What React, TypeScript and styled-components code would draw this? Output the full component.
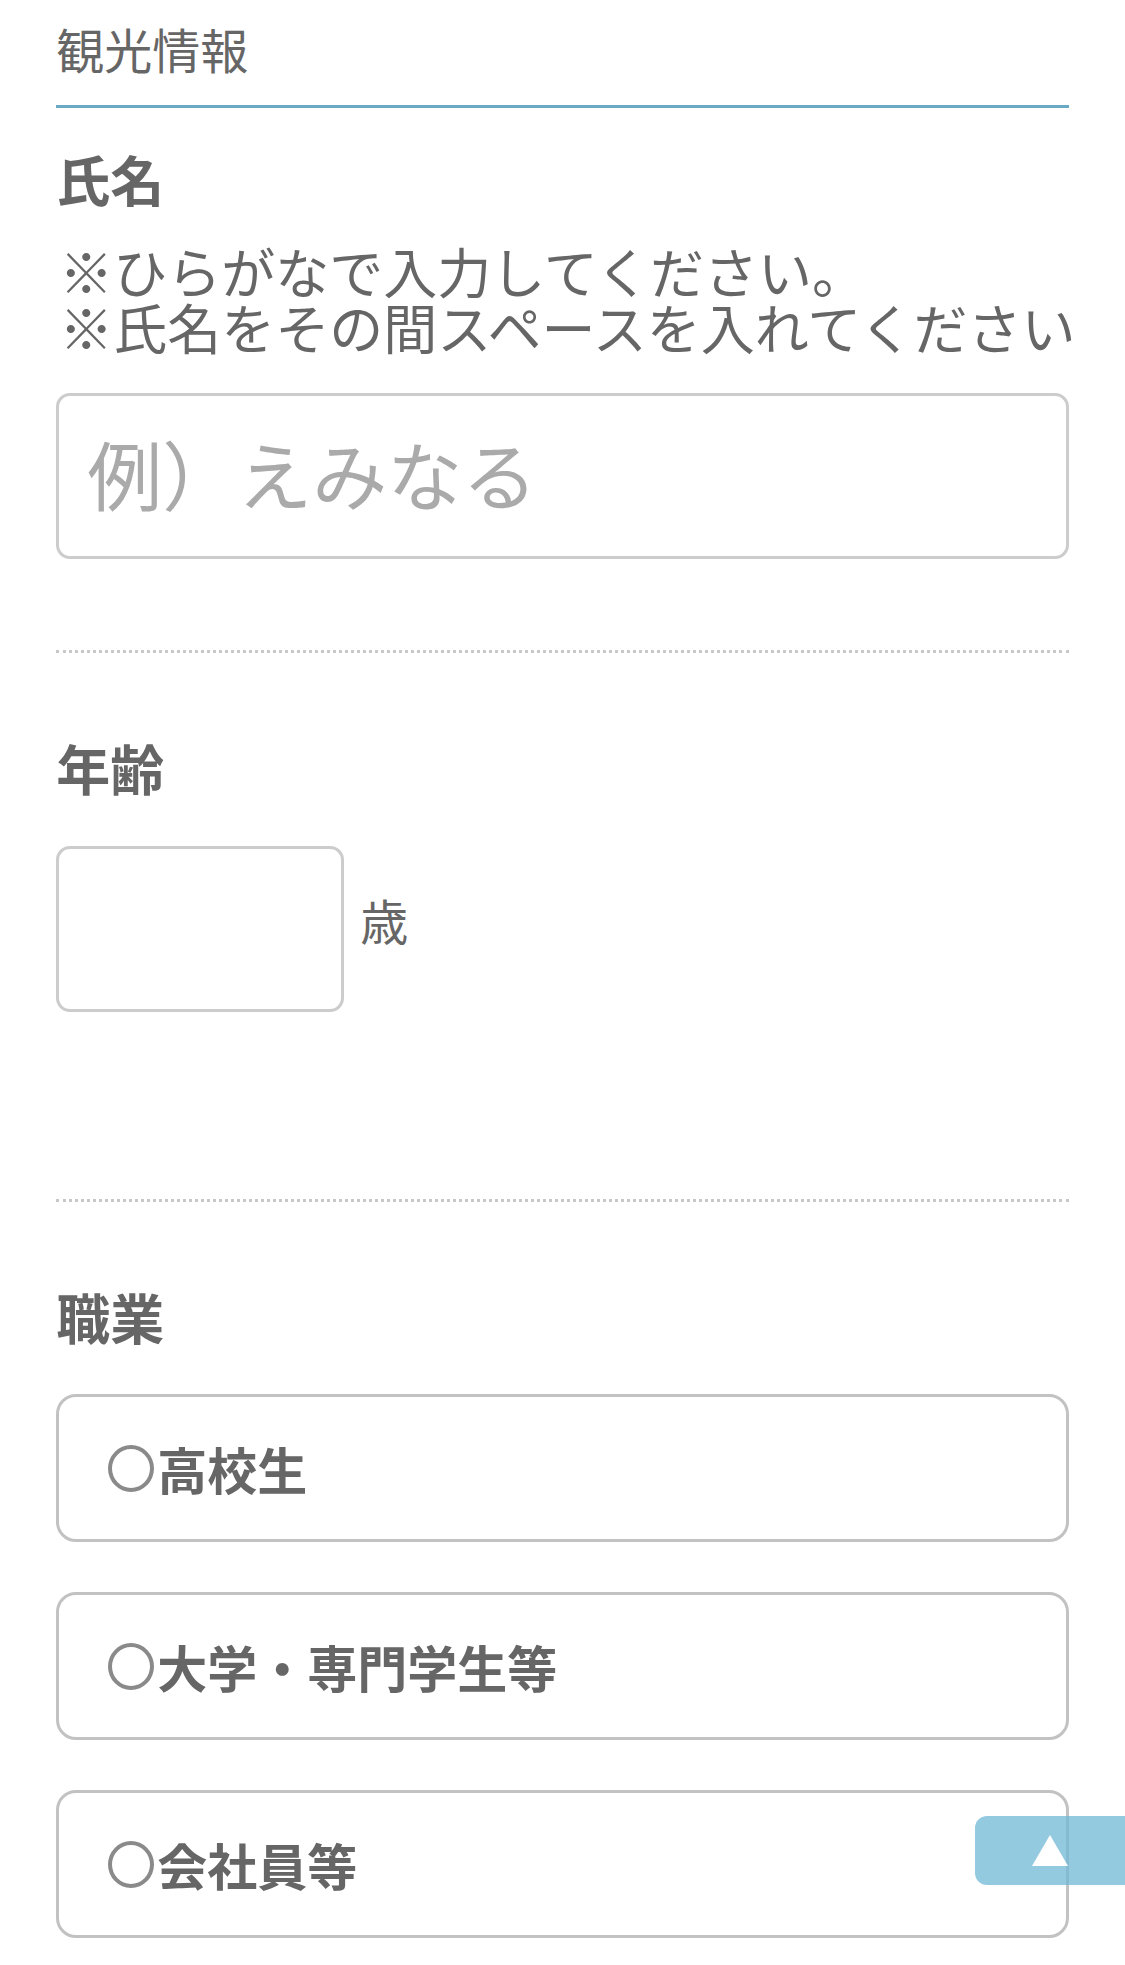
import React from 'react';
import styled, { createGlobalStyle } from 'styled-components';

const colours = {
  text: '#666666',
  placeholder: '#aaaaaa',
  accent: '#6aa9c4',
  inputBorder: '#cccccc',
  optionBorder: '#c2c2c2',
  dotted: '#c8c8c8',
};

const GlobalStyle = createGlobalStyle`
  body {
    margin: 0;
    background: #ffffff;
    font-family: "Noto Sans CJK JP", "Noto Sans", sans-serif;
    color: ${colours.text};
  }
`;

const Page = styled.div`
  width: 90%;
  margin: 0 auto;
  padding-bottom: 120px;
`;

const Heading = styled.h2`
  margin: 0;
  padding: 24px 0 33px;
  font-size: 48px;
  line-height: 48px;
  font-weight: 400;
  border-bottom: 3px solid ${colours.accent};
`;

const Field = styled.section<{ top: number; bottom: number; divider?: boolean }>`
  padding-top: ${props => props.top}px;
  padding-bottom: ${props => props.bottom}px;
  border-bottom: ${props => props.divider ? `3px dotted ${colours.dotted}` : 'none'};
`;

const Label = styled.h3<{ gap: number }>`
  margin: 0 0 ${props => props.gap}px;
  font-size: 54px;
  line-height: 54px;
  font-weight: 700;
`;

const Note = styled.p`
  margin: 0 0 38px;
  padding-left: 3px;
  font-size: 54px;
  line-height: 56px;
  white-space: nowrap;
`;

const TextBox = styled.input`
  display: block;
  box-sizing: border-box;
  width: 100%;
  height: 166px;
  padding: 0 28px 8px;
  border: 3px solid ${colours.inputBorder};
  border-radius: 14px;
  font: inherit;
  font-size: 75px;
  color: ${colours.text};
  outline: none;
  &::placeholder {
    color: ${colours.placeholder};
  }
`;

const AgeRow = styled.div`
  display: flex;
  align-items: center;
  gap: 16px;
`;

const AgeBox = styled(TextBox)`
  width: 288px;
  padding-bottom: 0;
  font-size: 48px;
`;

const Unit = styled.span`
  margin-bottom: 20px;
  font-size: 48px;
  line-height: 48px;
`;

const OptionList = styled.div`
  display: flex;
  flex-direction: column;
  gap: 50px;
`;

const Option = styled.label`
  display: flex;
  align-items: center;
  box-sizing: border-box;
  height: 148px;
  padding-left: 49px;
  border: 3px solid ${colours.optionBorder};
  border-radius: 20px;
  font-size: 50px;
  font-weight: 700;
  cursor: pointer;
  input {
    display: none;
  }
`;

const Circle = styled.span`
  box-sizing: border-box;
  width: 46px;
  height: 47px;
  margin-right: 3px;
  border: 4px solid #8a8a8a;
  border-radius: 50%;
`;

const TopButton = styled.a`
  position: fixed;
  right: 0;
  bottom: 80px;
  width: 150px;
  height: 69px;
  display: flex;
  align-items: center;
  justify-content: center;
  background: rgba(112, 184, 214, 0.75);
  border-radius: 12px 0 0 12px;
`;

const Arrow = styled.span`
  width: 0;
  height: 0;
  border-left: 18px solid transparent;
  border-right: 18px solid transparent;
  border-bottom: 31px solid #ffffff;
`;

const jobs = ['高校生', '大学・専門学生等', '会社員等'];

const App = () => {
  const [job, setJob] = React.useState('');

  return (
    <Page>
      <GlobalStyle />
      <Heading>観光情報</Heading>

      <Field top={44} bottom={91} divider>
        <Label gap={37}>氏名</Label>
        <Note>
          ※ひらがなで入力してください。<br />
          ※氏名をその間スペースを入れてください
        </Note>
        <TextBox type="text" placeholder="例）えみなる" />
      </Field>

      <Field top={88} bottom={187} divider>
        <Label gap={51}>年齢</Label>
        <AgeRow>
          <AgeBox type="text" inputMode="numeric" />
          <Unit>歳</Unit>
        </AgeRow>
      </Field>

      <Field top={88} bottom={0}>
        <Label gap={50}>職業</Label>
        <OptionList>
          {jobs.map(name => (
            <Option key={name}>
              <input type="radio" name="job" checked={job === name} onChange={() => setJob(name)} />
              <Circle />
              {name}
            </Option>
          ))}
        </OptionList>
      </Field>

      <TopButton href="#" aria-label="ページの先頭へ">
        <Arrow />
      </TopButton>
    </Page>
  );
};

export default App;
